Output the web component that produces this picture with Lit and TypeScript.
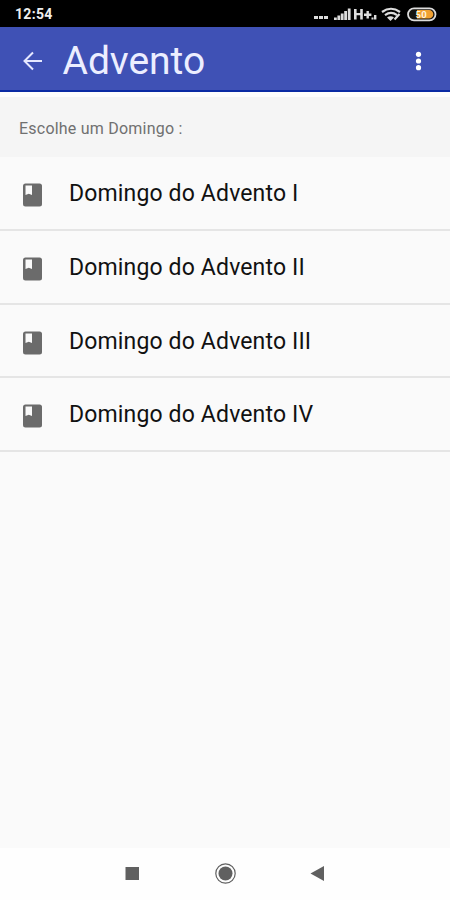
import { LitElement, html, css } from "lit";
import { customElement } from "lit/decorators.js";

const SUNDAYS = ["I", "II", "III", "IV"];

@customElement("app-root")
export class AppRoot extends LitElement {
  static styles = css`
    :host {
      display: flex;
      flex-direction: column;
      width: 450px;
      height: 900px;
      overflow: hidden;
      background: #fafafa;
      font-family: Roboto, "Liberation Sans", sans-serif;
    }
    svg { display: block; flex: none; }
    .status {
      flex: none;
      height: 27px;
      box-sizing: border-box;
      display: flex;
      align-items: center;
      justify-content: space-between;
      padding: 1px 12px 0 15px;
      background: #000;
      color: #eee;
      font-size: 14px;
      font-weight: 700;
      letter-spacing: 0.3px;
    }
    .bar {
      flex: none;
      height: 65px;
      box-sizing: border-box;
      display: flex;
      align-items: center;
      padding: 4px 19px 0 20px;
      background: #3f51b5;
      border-bottom: 2px solid #0a2aa3;
      color: #eceeff;
    }
    .title {
      flex: 1;
      margin: 0 0 0 16.5px;
      font-size: 39px;
      font-weight: 400;
      line-height: 58px;
      letter-spacing: -0.05px;
    }
    .prompt {
      flex: none;
      height: 65px;
      box-sizing: border-box;
      border-top: 5px solid #fdfdfd;
      padding: 2px 19px 0;
      background: #f5f5f5;
      color: #707070;
      font-size: 16px;
      line-height: 60px;
      letter-spacing: 0.22px;
    }
    .list { flex: 1; margin: 0; padding: 0.4px 0 0; list-style: none; }
    .row {
      height: 73.6px;
      box-sizing: border-box;
      display: flex;
      align-items: center;
      border-bottom: 2px solid #e5e5e5;
      padding: 1px 0 0 23px;
      color: #111;
      font-size: 23px;
      letter-spacing: 0.15px;
    }
    .label { padding-top: 0.6px; }
    .book { margin: 3.6px 27px 0 0; }
    .nav { flex: none; height: 52px; background: #fefefe; }
  `;

  render() {
    return html`
      <div class="status">
        <span>12:54</span>
        <svg width="126" height="20" viewBox="312 4 126 20" fill="#ddd">
          <path d="M314 16h4v3h-4zM319 16h4v3h-4zM324 16h4v3h-4z" />
          <path d="M334 17.500h2.800V20H334zM337.400 15.500h2.800V20h-2.800zM340.800 13.500h2.800V20h-2.800zM344.200 11h2.800v9h-2.800zM347.800 8.500h2.800V20h-2.800z" />
          <path d="M354 9h2.600v4h3.600V9h2.600v10.500h-2.600v-4.200h-3.600v4.200H354zM366.500 11h2.400v2.500h2.500v2.400h-2.500v2.500h-2.400v-2.500H364v-2.400h2.500zM371.500 17.500h2V19.500h-2zM374 15h2.400v4.500H374z" />
          <g fill="none" stroke="#ddd" stroke-width="2.200">
            <path d="M382 12q9-6.500 18 0M385 15.200q6-4.500 12 0" />
            <path d="M394.500 19.500l5-5.500" />
          </g>
          <path d="M387 17.500q3.500-2.500 7 0L390.500 21z" />
          <rect x="408" y="8.300" width="27.500" height="12" rx="6" fill="#15130f" stroke="#ddd" stroke-width="1.800" />
          <path d="M417 10h12a4.300 4.300 0 0 1 0 8.600h-12z" fill="#f0a032" />
          <text x="415.500" y="17.600" font-size="9.500" font-weight="700" fill="#fff4df">50</text>
        </svg>
      </div>
      <header class="bar">
        <svg width="26" height="26" viewBox="20 48 26 26" fill="none" stroke="#e5e8ff" stroke-width="2">
          <path d="M42 61H25M33 52.500L24.500 61l8.500 8.500" />
        </svg>
        <h1 class="title">Advento</h1>
        <svg width="24" height="26" viewBox="407 48 24 26" fill="#fff">
          <circle cx="418.500" cy="54.300" r="2.600" />
          <circle cx="418.500" cy="61" r="2.600" />
          <circle cx="418.500" cy="67.700" r="2.600" />
        </svg>
      </header>
      <div class="prompt">Escolhe um Domingo :</div>
      <ul class="list">
        ${SUNDAYS.map(
          (n) => html`<li class="row">
            <svg class="book" width="19" height="24" viewBox="0 0 19 24">
              <rect x="0" y="0.500" width="19" height="23" rx="2.500" fill="#6b6b6b" />
              <path d="M2.500 2.500h6.500v9.500l-3.200-1.200-3.300 1.200z" fill="#fafafa" />
            </svg>
            <span class="label">Domingo do Advento ${n}</span>
          </li>`
        )}
      </ul>
      <nav class="nav">
        <svg width="450" height="52" viewBox="0 848 450 52" fill="#606060">
          <rect x="125.500" y="867" width="13.500" height="13" />
          <circle cx="225.500" cy="873.500" r="7" />
          <circle cx="225.500" cy="873.500" r="9.700" fill="none" stroke="#606060" stroke-width="1.200" />
          <path d="M310.500 873.500L324 866v15z" />
        </svg>
      </nav>
    `;
  }
}
